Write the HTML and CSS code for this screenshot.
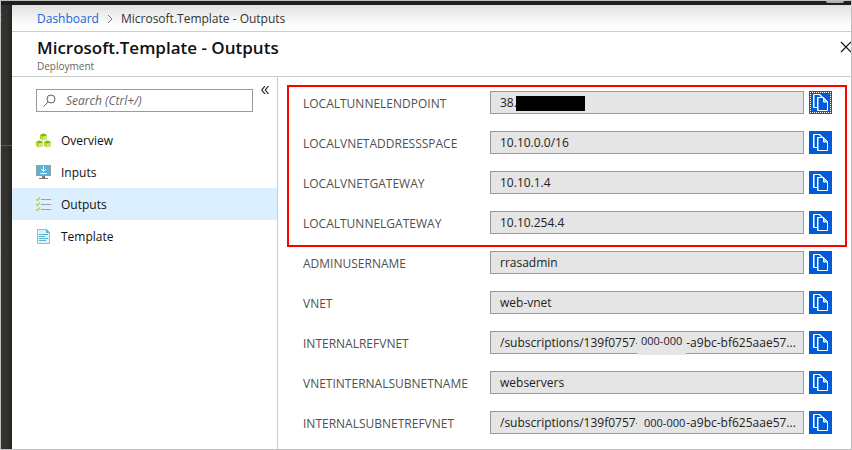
FILE: index.html
```html
<!DOCTYPE html>
<html lang="en">
<head>
<meta charset="utf-8">
<title>Microsoft.Template - Outputs</title>
<link rel="stylesheet" href="styles.css">
</head>
<body>
<svg class="defs" aria-hidden="true">
  <symbol id="copy" viewBox="0 0 23 23">
    <path d="M8.500 16.500H4.500V3.500H11" fill="none" stroke="#fff"/>
    <path d="M5.500 4v12" fill="none" stroke="#fff" stroke-opacity=".5"/>
    <path d="M10.500 3.500l4 4" fill="none" stroke="#fff" stroke-width="1.200"/>
    <path d="M8.500 6.500h6l4 4.500v8.500h-10z" fill="#015cda" stroke="#fff"/>
    <path d="M9.500 7v12" fill="none" stroke="#fff" stroke-opacity=".5"/>
    <path d="M14.500 6.500v4.500h4z" fill="#a9cbf5" stroke="#fff"/>
  </symbol>
  <symbol id="cube" viewBox="0 0 7 7">
    <path d="M3.500 0L7 1.500v4L3.500 7 0 5.500v-4z" fill="#b8d432"/>
    <path d="M3.500 3L7 1.500v4L3.500 7z" fill="#d0e37d"/>
    <path d="M3.500 0L7 1.500 3.500 3 0 1.500z" fill="#7fba00"/>
    <path d="M3.500 3v4" stroke="#f3f8dc" stroke-width=".5"/>
  </symbol>
</svg>
<div class="frame">
  <div class="topbar"><span class="avatar"></span></div>
  <div class="shell">
    <div class="rail"><span class="rail-mark">:</span></div>
    <main class="blade">
      <nav class="crumbs" aria-label="Breadcrumb">
        <a href="#">Dashboard</a>
        <svg class="chevron" viewBox="0 0 6 10"><path d="M1 1l4 4-4 4" fill="none" stroke="#777"/></svg>
        <span>Microsoft.Template - Outputs</span>
      </nav>
      <header class="head">
        <div>
          <h1>Microsoft.Template - Outputs</h1>
          <p>Deployment</p>
        </div>
        <button class="close" aria-label="Close"><svg viewBox="0 0 12 12"><path d="M1 1l10 10M11 1L1 11" stroke="#111" stroke-width="1.200"/></svg></button>
      </header>
      <div class="body">
        <aside class="menu">
          <div class="tools">
            <label class="search">
              <svg viewBox="0 0 13 13"><circle cx="8" cy="5" r="4" fill="none" stroke="#666"/><path d="M5 8L.5 12.500" stroke="#666"/></svg>
              <input type="text" placeholder="Search (Ctrl+/)" aria-label="Search">
            </label>
            <button class="collapse" aria-label="Collapse menu"><svg viewBox="0 0 8 8"><path d="M4 0L.8 4 4 8M7.500 0L4.300 4l3.200 4" fill="none" stroke="#222" stroke-width="1.200"/></svg></button>
          </div>
          <ul>
            <li><a href="#">
              <svg viewBox="0 0 16 16"><use href="#cube" x="4" y="0" width="7" height="8"/><use href="#cube" x="0" y="7" width="7" height="8"/><use href="#cube" x="8" y="7" width="7" height="8"/></svg>
              Overview</a></li>
            <li><a href="#">
              <svg viewBox="0 0 16 16"><path d="M0 0h15v11H0z" fill="#9a9b9d"/><path d="M1 1h13v9H1z" fill="#59b4d9"/><path d="M6 11h3v2h3v1H3v-1h3z" fill="#7a7a7a"/><path d="M7.500 1v5M5 4l2.500 2.500L10 4M4.500 8.500h6" fill="none" stroke="#fff"/></svg>
              Inputs</a></li>
            <li class="current"><a href="#" aria-current="page">
              <svg viewBox="0 0 16 16"><path d="M5 2.500h10M5 7.500h10M5 12.500h10" stroke="#a0a1a2"/><path d="M0 2l1.500 1.500L4 .5M0 7l1.500 1.500L4 5.500M0 12l1.500 1.500L4 10.500" fill="none" stroke="#b8d432" stroke-width="1.200"/></svg>
              Outputs</a></li>
            <li><a href="#">
              <svg viewBox="0 0 16 16"><path d="M1.500.5h9l3 3v11h-12z" fill="#dff2fa" stroke="#7cc5e3"/><path d="M10.500.5v3h3z" fill="#59b4d9" stroke="#59b4d9"/><path d="M3 5.500h9M3 7.500h6M3 9.500h9M3 11.500h7" stroke="#59b4d9"/></svg>
              Template</a></li>
          </ul>
        </aside>
        <form class="outputs">
          <div class="group marked">
            <div class="row"><label for="o1">LOCALTUNNELENDPOINT</label><div class="field"><input id="o1" type="text" readonly value="38."><span class="redacted"></span></div><button type="button" class="copy focused" aria-label="Copy"><svg><use href="#copy"/></svg></button></div>
            <div class="row"><label for="o2">LOCALVNETADDRESSSPACE</label><div class="field"><input id="o2" type="text" readonly value="10.10.0.0/16"></div><button type="button" class="copy" aria-label="Copy"><svg><use href="#copy"/></svg></button></div>
            <div class="row"><label for="o3">LOCALVNETGATEWAY</label><div class="field"><input id="o3" type="text" readonly value="10.10.1.4"></div><button type="button" class="copy" aria-label="Copy"><svg><use href="#copy"/></svg></button></div>
            <div class="row"><label for="o4">LOCALTUNNELGATEWAY</label><div class="field"><input id="o4" type="text" readonly value="10.10.254.4"></div><button type="button" class="copy" aria-label="Copy"><svg><use href="#copy"/></svg></button></div>
          </div>
          <div class="group">
            <div class="row"><label for="o5">ADMINUSERNAME</label><div class="field"><input id="o5" type="text" readonly value="rrasadmin"></div><button type="button" class="copy" aria-label="Copy"><svg><use href="#copy"/></svg></button></div>
            <div class="row"><label for="o6">VNET</label><div class="field"><input id="o6" type="text" readonly value="web-vnet"></div><button type="button" class="copy" aria-label="Copy"><svg><use href="#copy"/></svg></button></div>
            <div class="row"><label for="o7">INTERNALREFVNET</label><div class="field"><input id="o7" type="text" readonly value="/subscriptions/139f0757-               -a9bc-bf625aae57..."><span class="patch low">000-000</span></div><button type="button" class="copy" aria-label="Copy"><svg><use href="#copy"/></svg></button></div>
            <div class="row"><label for="o8">VNETINTERNALSUBNETNAME</label><div class="field"><input id="o8" type="text" readonly value="webservers"></div><button type="button" class="copy" aria-label="Copy"><svg><use href="#copy"/></svg></button></div>
            <div class="row"><label for="o9">INTERNALSUBNETREFVNET</label><div class="field"><input id="o9" type="text" readonly value="/subscriptions/139f0757-               -a9bc-bf625aae57..."><span class="patch">000-000</span></div><button type="button" class="copy" aria-label="Copy"><svg><use href="#copy"/></svg></button></div>
          </div>
        </form>
      </div>
    </main>
  </div>
</div>
</body>
</html>
```
FILE: styles.css
```css
* { box-sizing: border-box; }
body {
  margin: 0;
  font: 12px/16px "Open Sans", "Noto Sans", sans-serif;
  color: #111;
}
button { padding: 0; border: 0; background: none; }
svg { display: block; flex: none; }
a { color: inherit; text-decoration: none; }
.defs { position: absolute; width: 0; height: 0; }

.frame {
  display: flex;
  flex-direction: column;
  min-height: 100vh;
  border: 1px solid #c0c0c0;
  overflow: hidden;
}
.topbar {
  display: flex;
  justify-content: flex-end;
  height: 4px;
  padding-right: 7px;
  background: #1b1f1d;
  overflow: hidden;
}
.avatar {
  width: 18px;
  height: 2px;
  border-radius: 0 0 9px 9px;
  background: #a9b0b4;
}
.shell { display: flex; flex: 1; }
.rail {
  width: 11px;
  background: linear-gradient(90deg, #33342f, #30312d 60%, #242522);
  color: #aaa;
}
.rail-mark {
  display: block;
  height: 141px;
  padding-top: 4px;
  border-bottom: 1px solid #5a5b58;
  text-indent: -2px;
}
.blade { display: flex; flex: 1; flex-direction: column; min-width: 0; background: #fff; }

.crumbs {
  display: flex;
  align-items: center;
  gap: 8px;
  height: 27px;
  padding: 2px 25px 0;
  border-bottom: 1px solid #ccc;
  background: linear-gradient(#e0e0e0, #fff 80%);
  color: #333;
}
.crumbs a { color: #1664d9; }
.chevron { width: 6px; height: 10px; }

.head {
  display: flex;
  justify-content: space-between;
  height: 45px;
  padding-left: 25px;
  border-bottom: 1px solid #ccc;
}
.head h1 { margin: 4px 0 0; font-size: 17px; line-height: 24px; font-weight: 600; color: #111; }
.head p { margin: 0; font-size: 10px; line-height: 12px; color: #666; }
.close { align-self: flex-start; margin: 9px -1px 0 0; }
.close svg { width: 12px; height: 12px; }

.body { display: flex; flex: 1; }
.menu { width: 266px; border-right: 1px solid #ccc; }
.tools { display: flex; align-items: flex-start; gap: 8px; padding: 12px 8px 0 24px; }
.search {
  display: flex;
  flex: 1;
  align-items: center;
  gap: 10px;
  height: 23px;
  padding: 0 6px;
  border: 1px solid #999;
}
.search svg { width: 13px; height: 13px; }
.search input {
  flex: 1;
  min-width: 0;
  padding: 0;
  border: 0;
  outline: 0;
  background: none;
  font: inherit;
}
.search input::placeholder { color: #666; font-style: italic; }
.collapse { margin: -3px 0 0; }
.collapse svg { width: 8px; height: 8px; }
.menu ul { margin: 12px 0 0; padding: 0; list-style: none; }
.menu li a { display: flex; align-items: center; gap: 9px; height: 32px; padding: 2px 24px 0; }
.menu li svg { width: 16px; height: 16px; }
.current { background: #dbeffe; }

.outputs { flex: 1; min-width: 0; padding: 8px 4px 10px 9px; }
.group { display: grid; gap: 17px; padding: 4px 15px 0 16px; }
.marked { padding: 4px 13px 11px 14px; border: 2px solid #f00; }
.row { display: flex; align-items: center; gap: 5px; height: 23px; }
.row label { width: 182px; padding-top: 2px; color: #505050; }
.field { position: relative; flex: 1; }
.field input {
  display: block;
  width: 100%;
  height: 23px;
  padding: 0 4px 0 9px;
  border: 1px solid #999;
  border-radius: 0;
  outline: 0;
  background: #e5e5e5;
  color: #222;
  font: inherit;
  text-overflow: ellipsis;
}
.redacted { position: absolute; top: 5px; left: 26px; width: 69px; height: 15px; background: #000; }
.patch {
  position: absolute;
  top: 3px;
  left: 147px;
  width: 49px;
  height: 17px;
  padding-left: 7px;
  background: #e5e5e5;
  color: #223;
  font-size: 11px;
  line-height: 17px;
}
.low { height: 21px; padding-left: 4px; line-height: 14px; }
.copy { width: 23px; height: 23px; background: #015cda; }
.copy svg { width: 23px; height: 23px; }
.focused { outline: 1px dotted #fff; outline-offset: -2px; }
```
